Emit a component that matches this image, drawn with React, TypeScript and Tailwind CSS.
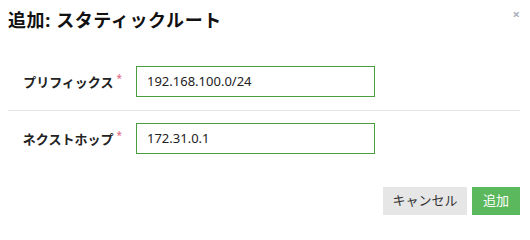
import React from "react";

const font = { fontFamily: '"Noto Sans", "Noto Sans CJK JP", sans-serif' };

function Row({ label, value, border }: { label: string; value: string; border?: boolean }) {
  return (
    <div className={`flex items-center pt-[12px] pb-[13px] ${border ? "border-b border-[#e5e5e5]" : ""}`}>
      <div className="w-[114px] flex justify-end items-start text-[13px] font-bold text-[#222] leading-[20px]">
        <span>{label}</span>
        <span className="ml-[3px] text-[10px] leading-[12px] text-[#e0607a] font-normal">*</span>
      </div>
      <div className="ml-[14px] w-[239px] h-[31px] border border-[#4a9e40] flex items-center px-[10px] text-[13px] text-[#222]">
        {value}
      </div>
    </div>
  );
}

export default function App() {
  return (
    <div className="relative w-[530px] h-[225px] bg-white" style={font}>
      <div className="h-[54px] pl-[8px] pt-[9px]">
        <h1 className="text-[18px] font-bold leading-[22px] tracking-[0.6px] text-[#111]">追加: スタティックルート</h1>
      </div>
      <button className="absolute right-[10px] top-[6px] text-[13px] leading-[16px] font-bold text-[#aab0bb]">×</button>
      <div className="pl-[8px] pr-[10px]">
        <Row label="プリフィックス" value="192.168.100.0/24" border />
        <Row label="ネクストホップ" value="172.31.0.1" />
        <div className="flex justify-end gap-[5px] mt-[20px]">
          <button className="w-[84px] h-[28px] bg-[#e6e6e6] text-[13px] text-[#333]">キャンセル</button>
          <button className="w-[48px] h-[28px] bg-[#5cb85c] text-[13px] text-white">追加</button>
        </div>
      </div>
    </div>
  );
}
